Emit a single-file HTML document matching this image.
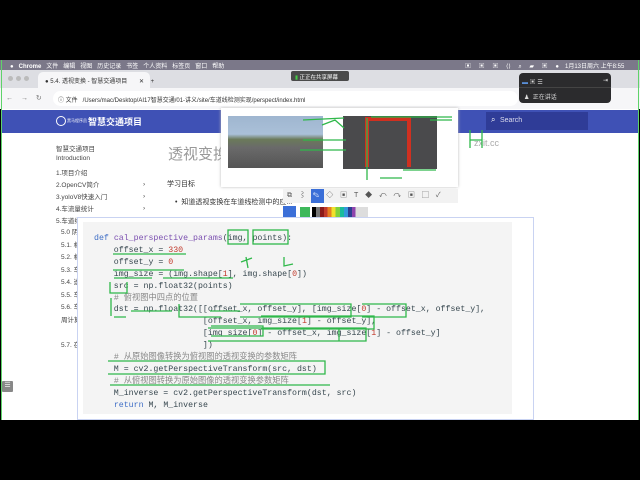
<!DOCTYPE html>
<html><head><meta charset="utf-8"><style>
*{margin:0;padding:0;box-sizing:border-box}
body{width:640px;height:480px;overflow:hidden;background:#000;position:relative;font-family:"Liberation Sans","Noto Sans CJK SC",sans-serif}
.a{position:absolute;white-space:nowrap}
.code{font-family:"Liberation Mono","Noto Sans CJK SC",monospace;font-size:8.25px;color:#37474f;line-height:11.9px;white-space:pre}
.kw{color:#3f6ec6}.fn{color:#7b4fb0}.num{color:#c0392b}.cm{color:#888}
.nav{font-size:6.5px;color:#444}
</style></head><body>
<div class="a" style="left:0;top:60px;width:640px;height:10px;background:#7b7889"></div>
<div class="a" style="left:10px;top:61px;font-size:6px;color:#fff;font-weight:bold">●&nbsp;&nbsp;&nbsp;Chrome&nbsp;&nbsp;&nbsp;<span style="font-weight:normal">文件&nbsp;&nbsp;&nbsp;编辑&nbsp;&nbsp;&nbsp;视图&nbsp;&nbsp;&nbsp;历史记录&nbsp;&nbsp;&nbsp;书签&nbsp;&nbsp;&nbsp;个人资料&nbsp;&nbsp;&nbsp;标签页&nbsp;&nbsp;&nbsp;窗口&nbsp;&nbsp;&nbsp;帮助</span></div>
<div class="a" style="left:465px;top:61px;font-size:6px;color:#fff;word-spacing:6px">▣ ▣ ▣ ⟨⟩ ⌕ ▰ ▣ ●</div>
<div class="a" style="left:565px;top:61px;font-size:6px;color:#fff">1月13日周六 上午8:55</div>
<div class="a" style="left:0;top:70px;width:640px;height:18px;background:#dddee3"></div>
<div class="a" style="left:8px;top:76px;width:5px;height:5px;border-radius:50%;background:#bbb;box-shadow:8px 0 #bbb,16px 0 #bbb"></div>
<div class="a" style="left:38px;top:72px;width:112px;height:16px;background:#f6f6f8;border-radius:5px 5px 0 0"></div>
<div class="a" style="left:45px;top:76px;font-size:6px;color:#333">● 5.4. 透视变换 - 智慧交通项目&nbsp;&nbsp;&nbsp;&nbsp;&nbsp;&nbsp;&nbsp;✕&nbsp;&nbsp;&nbsp;&nbsp;+</div>
<div class="a" style="left:291px;top:71px;width:58px;height:10px;background:#4a4a4a;border-radius:2px;font-size:5.5px;color:#fff;padding:2px 4px"><span style="color:#4c4">▮</span> 正正在共享屏幕</div>
<div class="a" style="left:0;top:88px;width:640px;height:21px;background:#f6f6f8"></div>
<div class="a" style="left:6px;top:94px;font-size:7px;color:#777;word-spacing:6px">← → ↻</div>
<div class="a" style="left:53px;top:91px;width:465px;height:15px;background:#fff;border-radius:8px"></div>
<div class="a" style="left:58px;top:95px;font-size:6px;color:#333">ⓘ 文件 &nbsp; /Users/mac/Desktop/AI17智慧交通/01-讲义/site/车道线检测实现/perspect/index.html</div>
<div class="a" style="left:519px;top:73px;width:92px;height:30px;background:#2b2b2d;border-radius:4px"></div>
<div class="a" style="left:522px;top:77px;font-size:6px;color:#ddd"><span style="color:#5a8fd8">▬</span> ▣ ☰</div>
<div class="a" style="left:603px;top:77px;font-size:6px;color:#ddd">⇥</div>
<div class="a" style="left:519px;top:87px;width:92px;height:1px;background:#444"></div>
<div class="a" style="left:524px;top:92px;font-size:6px;color:#ddd">♟ &nbsp;正在讲话</div>
<div class="a" style="left:2px;top:109px;width:636px;height:311px;background:#fff"></div>
<div class="a" style="left:2px;top:110px;width:636px;height:23px;background:#3f51b5"></div>
<div class="a" style="left:56px;top:116px;width:10px;height:10px;border-radius:50%;border:1.5px solid #fff"></div>
<div class="a" style="left:67px;top:118px;font-size:4px;color:#fff">黑马程序员</div>
<div class="a" style="left:88px;top:115px;font-size:9px;color:#fff;font-weight:bold">智慧交通项目</div>
<div class="a" style="left:486px;top:112px;width:102px;height:18px;background:#2f3c97"></div>
<div class="a" style="left:491px;top:115px;font-size:8px;color:#fff">⌕ &nbsp;<span style="font-size:7px;color:#dde">Search</span></div>
<div class="a nav" style="left:56px;top:143px">智慧交通项目</div>
<div class="a nav" style="left:56px;top:155px">Introduction</div>
<div class="a nav" style="left:56px;top:167px">1.项目介绍</div>
<div class="a nav" style="left:56px;top:179px">2.OpenCV简介</div>
<div class="a nav" style="left:56px;top:191px">3.yoloV8快速入门</div>
<div class="a nav" style="left:56px;top:203px">4.车流量统计</div>
<div class="a nav" style="left:56px;top:215px">5.车道线检测实现</div>
<div class="a nav" style="left:143px;top:179px;line-height:12px">›<br>›<br>›</div>
<div class="a nav" style="left:61px;top:227px;line-height:12.5px">5.0 阴<br>5.1. 相<br>5.2. 相<br>5.3. 车<br>5.4. 透<br>5.5. 车<br>5.6. 车<br>周计算<br><br>5.7. 在</div>
<div class="a" style="left:2px;top:381px;width:11px;height:11px;background:#888;border-radius:1px;color:#fff;font-size:7px;text-align:center">☰</div>
<div class="a" style="left:168px;top:143px;font-size:15px;color:#999">透视变换</div>
<div class="a" style="left:474px;top:138px;font-size:9px;color:#aaa">zxit.cc</div>
<div class="a" style="left:167px;top:179px;font-size:7px;color:#333">学习目标</div>
<div class="a" style="left:175px;top:197px;font-size:7px;color:#333">• &nbsp;知道透视变换在车道线检测中的应...</div>
<div class="a" style="left:221px;top:108px;width:237px;height:79px;background:#fff;box-shadow:0 0 3px #bbb"></div>
<div class="a" style="left:228px;top:116px;width:95px;height:52px;background:linear-gradient(#9fb6d0 0,#aac0d8 35%,#6b7a5a 45%,#6a6a6a 60%,#555 100%)"></div>
<div class="a" style="left:343px;top:116px;width:94px;height:53px;background:#4a4a4c"></div>
<div class="a" style="left:365px;top:117px;width:46px;height:50px;border:4px solid #d03020;border-bottom:none"></div>
<div class="a" style="left:283px;top:189px;width:175px;height:14px;background:#f2f2f2"></div>
<div class="a" style="left:311px;top:189px;width:13px;height:14px;background:#3b6fd8"></div>
<div class="a" style="left:287px;top:190px;font-size:7px;color:#555;word-spacing:5px">⧉ ⌇ <span style="color:#fff">✎</span> ◇ ▣ T ◆ ↶ ↷ ▣ ▢ ✓</div>
<div class="a" style="left:283px;top:206px;width:13px;height:13px;background:#3b6fd8"></div>
<div class="a" style="left:300px;top:207px;width:10px;height:10px;background:#3db85a"></div>
<div class="a" style="left:312px;top:207px;width:56px;height:11px;background:linear-gradient(90deg,#000 0 7%,#777 7% 14%,#8b1a1a 14% 21%,#c0392b 21% 28%,#e67e22 28% 35%,#f1e02b 35% 42%,#7fd13b 42% 50%,#1abc9c 50% 57%,#3498db 57% 64%,#2c3e90 64% 71%,#8e44ad 71% 78%,#ddd 78%)"></div>
<div class="a" style="left:77px;top:217px;width:457px;height:203px;border:1.5px solid #c9d3f2;background:#fff"></div>
<div class="a" style="left:83px;top:222px;width:429px;height:192px;background:#f4f4f4"></div>
<pre class="a code" style="left:94px;top:233px"><span class="kw">def</span> <span class="fn">cal_perspective_params</span>(img, points):
    offset_x = <span class="num">330</span>
    offset_y = <span class="num">0</span>
    img_size = (img.shape[<span class="num">1</span>], img.shape[<span class="num">0</span>])
    src = np.float32(points)
    <span class="cm"># 俯视图中四点的位置</span>
    dst = np.float32([[offset_x, offset_y], [img_size[<span class="num">0</span>] - offset_x, offset_y],
                      [offset_x, img_size[<span class="num">1</span>] - offset_y],
                      [img_size[<span class="num">0</span>] - offset_x, img_size[<span class="num">1</span>] - offset_y]
                      ])
    <span class="cm"># 从原始图像转换为俯视图的透视变换的参数矩阵</span>
    M = cv2.getPerspectiveTransform(src, dst)
    <span class="cm"># 从俯视图转换为原始图像的透视变换参数矩阵</span>
    M_inverse = cv2.getPerspectiveTransform(dst, src)
    <span class="kw">return</span> M, M_inverse</pre>
<svg class="a" style="left:0;top:0" width="640" height="480" fill="none" stroke="#2fb84a" stroke-width="1.3">
<rect x="1" y="60" width="1" height="360" fill="#5fd36a" stroke="none"/>
<rect x="638" y="60" width="1" height="360" fill="#5fd36a" stroke="none"/>
<rect x="228" y="230" width="20" height="14"/><rect x="253" y="230" width="35" height="14"/>
<path d="M113 254H186M113 270H184M114 278H152M163 278H233M110 282V293H127V282M111 298V316M114 317H126M131 311H172M179 304V317H221M240 304H351V317H240M362 304H406V317H362M210 311H240M211 326H263V336H211M261 316H374V329H261M208 328H339V341H208M252 328H366V341H252M108 361H325V374H108M110 385H330"/>
<path d="M241 262L252 258M246 257L248 268M284 257L284 266L293 264"/>
<path d="M322 125L335 120L344 128M303 140H346M300 150H346M303 120L344 118M371 117H452M367 118V180M430 120H452M470 130V148M470 140H482M482 130V148M403 170H436M380 178H402"/>
</svg>
<div class="a" style="left:0;top:420px;width:640px;height:60px;background:#000"></div>
</body></html>
